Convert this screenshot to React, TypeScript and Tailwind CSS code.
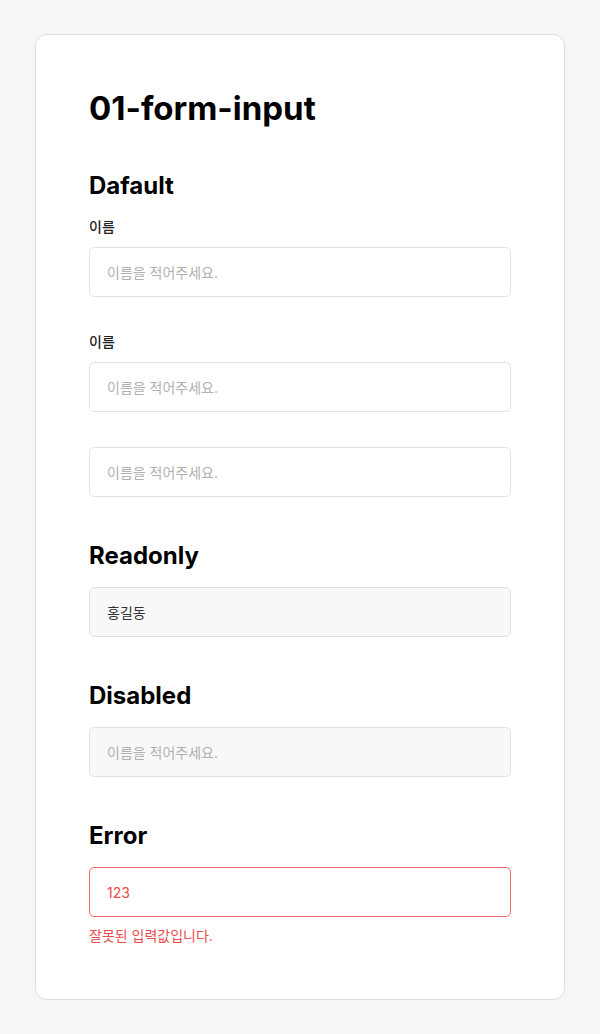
import React from "react";

const font = { fontFamily: '"Inter", "Noto Sans CJK KR", sans-serif' };

function Label({ children, className = "" }: { children: React.ReactNode; className?: string }) {
  return <label className={`block text-[14px] leading-[20px] font-medium text-[#222] ${className}`}>{children}</label>;
}

const inputBase =
  "block w-full h-[50px] rounded-[5px] border px-[17px] text-[14px] outline-none";

export default function App() {
  return (
    <div className="min-h-screen bg-[#f6f6f6] px-[35px] pt-[34px] pb-[35px]" style={font}>
      <div className="bg-white border border-[#dedede] rounded-[12px] px-[53px] pt-[53px] pb-[53px]">
        <h1 className="text-[33px] leading-[40px] font-bold text-black">01-form-input</h1>

        <h2 className="mt-[42px] text-[24px] leading-[32px] font-bold text-black">Dafault</h2>
        <Label className="mt-[15px]">이름</Label>
        <input
          className={`${inputBase} mt-[10px] border-[#e2e2e2] bg-white text-[#222] placeholder:text-[#b0b0b0]`}
          placeholder="이름을 적어주세요."
        />
        <Label className="mt-[35px]">이름</Label>
        <input
          className={`${inputBase} mt-[10px] border-[#e2e2e2] bg-white text-[#222] placeholder:text-[#b0b0b0]`}
          placeholder="이름을 적어주세요."
        />
        <input
          className={`${inputBase} mt-[35px] border-[#e2e2e2] bg-white text-[#222] placeholder:text-[#b0b0b0]`}
          placeholder="이름을 적어주세요."
        />

        <h2 className="mt-[43px] text-[24px] leading-[32px] font-bold text-black">Readonly</h2>
        <input
          readOnly
          value="홍길동"
          className={`${inputBase} mt-[15px] border-[#e2e2e2] bg-[#f8f8f8] text-[#333]`}
        />

        <h2 className="mt-[43px] text-[24px] leading-[32px] font-bold text-black">Disabled</h2>
        <input
          disabled
          className={`${inputBase} mt-[15px] border-[#e2e2e2] bg-[#f8f8f8] text-[#333] placeholder:text-[#b0b0b0]`}
          placeholder="이름을 적어주세요."
        />

        <h2 className="mt-[43px] text-[24px] leading-[32px] font-bold text-black">Error</h2>
        <input
          defaultValue="123"
          className={`${inputBase} mt-[15px] border-[#ef6b6b] bg-white text-[#e84c4c]`}
        />
        <p className="mt-[9px] text-[14px] leading-[20px] text-[#e84c4c]">잘못된 입력값입니다.</p>
      </div>
    </div>
  );
}
